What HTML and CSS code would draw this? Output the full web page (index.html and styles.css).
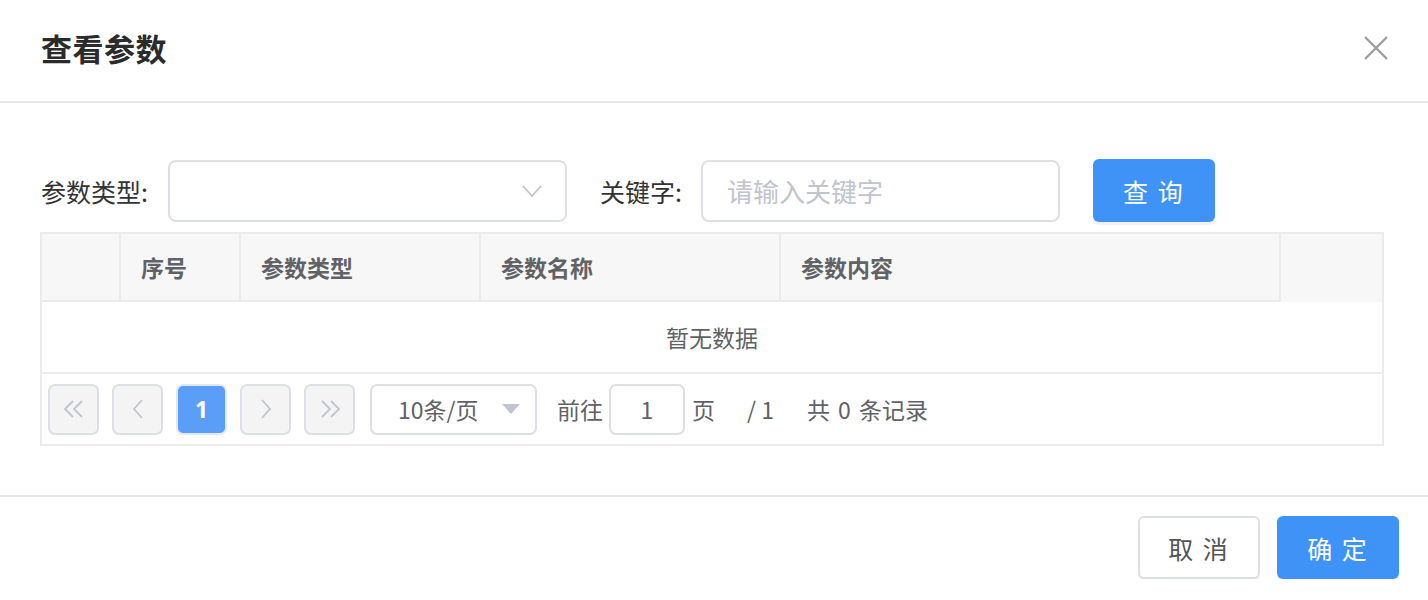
FILE: index.html
```html
<!DOCTYPE html>
<html lang="zh">
<head>
<meta charset="utf-8">
<title>查看参数</title>
<link rel="stylesheet" href="styles.css">
</head>
<body>
<div class="dialog">
  <div class="dlg-header">
    <span class="dlg-title">查看参数</span>
    <button class="dlg-close" aria-label="关闭">
      <svg width="24" height="24" viewBox="0 0 24 24"><path d="M1 1 L23 23 M23 1 L1 23" stroke="#9a9a9a" stroke-width="2.2" fill="none"/></svg>
    </button>
  </div>
  <div class="dlg-body">
    <div class="filter">
      <label class="f-label">参数类型:</label>
      <div class="f-select">
        <svg class="chev" width="20" height="12" viewBox="0 0 20 12"><path d="M1 1 L10 11 L19 1" stroke="#c0c4cc" stroke-width="1.8" fill="none"/></svg>
      </div>
      <label class="f-label f-label2">关键字:</label>
      <div class="f-input">请输入关键字</div>
      <button class="btn-primary btn-query">查 询</button>
    </div>
    <div class="grid">
      <div class="g-head">
        <div class="hc c-sel"></div>
        <div class="hc c-no">序号</div>
        <div class="hc c-type">参数类型</div>
        <div class="hc c-name">参数名称</div>
        <div class="hc c-content">参数内容</div>
        <div class="hc c-gutter"></div>
      </div>
      <div class="g-empty">暂无数据</div>
      <div class="pager">
        <span class="pbtn"><svg width="22" height="18" viewBox="0 0 22 18"><path d="M10 1 L2 9 L10 17 M19 1 L11 9 L19 17" stroke="#c0c4cc" stroke-width="1.8" fill="none"/></svg></span>
        <span class="pbtn"><svg width="12" height="20" viewBox="0 0 12 20"><path d="M10 1 L2 10 L10 19" stroke="#c0c4cc" stroke-width="1.8" fill="none"/></svg></span>
        <span class="pbtn pbtn-active">1</span>
        <span class="pbtn"><svg width="12" height="20" viewBox="0 0 12 20"><path d="M2 1 L10 10 L2 19" stroke="#c0c4cc" stroke-width="1.8" fill="none"/></svg></span>
        <span class="pbtn pbtn-last"><svg width="22" height="18" viewBox="0 0 22 18"><path d="M3 1 L11 9 L3 17 M12 1 L20 9 L12 17" stroke="#c0c4cc" stroke-width="1.8" fill="none"/></svg></span>
        <div class="psize">
          <span>10条/页</span>
          <svg width="18" height="10" viewBox="0 0 18 10"><path d="M0 0 L18 0 L9 10 Z" fill="#c0c4cc"/></svg>
        </div>
        <span class="ptext pgo">前往</span>
        <span class="pinput">1</span>
        <span class="ptext pye">页</span>
        <span class="ptext ptotal">/ 1</span>
        <span class="ptext pcount">共 0 条记录</span>
      </div>
    </div>
  </div>
  <div class="dlg-footer">
    <button class="btn-default">取 消</button>
    <button class="btn-primary btn-ok">确 定</button>
  </div>
</div>
</body>
</html>
```
FILE: styles.css
```css
* { box-sizing: border-box; }
html, body { margin: 0; padding: 0; background: #fff; }
body {
  font-family: "Noto Sans CJK SC", "Noto Sans", sans-serif;
  color: #333;
}
button { font-family: inherit; cursor: pointer; }

.dlg-header {
  height: 103px;
  border-bottom: 2px solid #e8e8e8;
  display: flex;
  align-items: center;
  justify-content: space-between;
  padding: 0 40px 6px 41px;
}
.dlg-title {
  font-size: 31px;
  font-weight: 700;
  color: #2b2b2b;
  letter-spacing: 0.5px;
}
.dlg-close {
  border: 0;
  background: transparent;
  padding: 0;
  width: 24px;
  height: 24px;
  display: flex;
}

.dlg-body {
  padding: 56px 44px 49px 40px;
}
.filter {
  display: flex;
  align-items: center;
  height: 63px;
}
.f-label {
  font-size: 25px;
  color: #333;
  margin-left: 1px;
  margin-right: 20px;
}
.f-label2 { margin-left: 33px; margin-right: 19px; }
.f-select {
  width: 399px;
  height: 62px;
  border: 2px solid #dcdfe6;
  border-radius: 8px;
  display: flex;
  align-items: center;
  justify-content: flex-end;
  padding-right: 23px;
}
.f-input {
  width: 359px;
  height: 62px;
  border: 2px solid #dcdfe6;
  border-radius: 8px;
  display: flex;
  align-items: center;
  padding-left: 24px;
  font-size: 26px;
  color: #c0c4cc;
}
.btn-primary {
  background: #4093f6;
  color: #fff;
  border: 0;
  border-radius: 6px;
  box-shadow: 0 3px 0 rgba(0, 0, 0, 0.05);
}
.btn-query {
  margin-left: 33px;
  width: 122px;
  height: 63px;
  font-size: 25px;
  letter-spacing: 2px;
}

.grid {
  margin-top: 10px;
  border: 2px solid #ebebeb;
}
.g-head {
  display: flex;
  background: #f7f7f7;
  height: 68px;
}
.hc {
  height: 68px;
  border-right: 2px solid #ebebeb;
  border-bottom: 2px solid #ebebeb;
  display: flex;
  align-items: center;
  padding-left: 20px;
  font-size: 23px;
  font-weight: 700;
  color: #606266;
}
.c-sel { width: 79px; }
.c-no { width: 120px; }
.c-type { width: 240px; }
.c-name { width: 300px; }
.c-content { width: 500px; }
.c-gutter { flex: 1; border: 0; }

.g-empty {
  height: 72px;
  border-bottom: 2px solid #ebebeb;
  display: flex;
  align-items: center;
  justify-content: center;
  font-size: 23px;
  color: #606266;
}

.pager {
  height: 70px;
  display: flex;
  align-items: center;
  padding-left: 6px;
  font-size: 23px;
  color: #606266;
}
.pbtn {
  width: 51px;
  height: 51px;
  border: 2px solid #dcdfe6;
  border-radius: 7px;
  background: #f4f4f5;
  display: flex;
  align-items: center;
  justify-content: center;
  margin-right: 13px;
}
.pbtn-last { margin-right: 0; }
.pbtn-active {
  background: #5b9ef8;
  border-color: #e3e8f0;
  color: #fff;
  font-weight: 700;
  font-size: 23px;
  font-family: "Noto Sans", sans-serif;
}
.psize {
  margin-left: 15px;
  width: 167px;
  height: 51px;
  border: 2px solid #dcdfe6;
  border-radius: 7px;
  display: flex;
  align-items: center;
  justify-content: space-between;
  padding: 0 15px 0 26px;
}
.ptext { white-space: pre; }
.pgo { margin-left: 20px; margin-right: 6px; }
.pinput {
  width: 76px;
  height: 51px;
  border: 2px solid #dcdfe6;
  border-radius: 7px;
  display: flex;
  align-items: center;
  justify-content: center;
}
.pye { margin-left: 7px; }
.ptotal { margin-left: 32px; }
.pcount { margin-left: 33px; word-spacing: 3px; }

.dlg-footer {
  border-top: 2px solid #e8e8e8;
  display: flex;
  justify-content: flex-end;
  padding: 19px 29px 0 0;
  gap: 17px;
}
.btn-default {
  width: 122px;
  height: 63px;
  border: 2px solid #dcdfe6;
  border-radius: 6px;
  background: #fff;
  color: #555;
  font-size: 25px;
  letter-spacing: 2px;
  box-shadow: 0 3px 0 rgba(0, 0, 0, 0.04);
}
.btn-ok {
  width: 122px;
  height: 63px;
  font-size: 25px;
  letter-spacing: 2px;
}
```
